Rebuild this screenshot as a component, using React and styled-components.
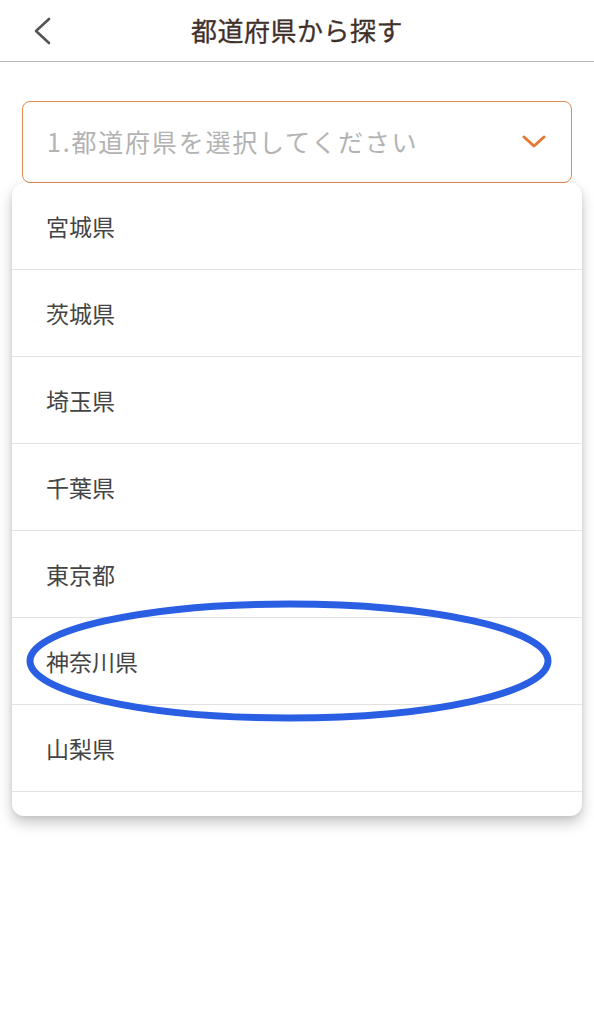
import React from "react";
import styled, { createGlobalStyle } from "styled-components";

const prefectures = [
  "宮城県",
  "茨城県",
  "埼玉県",
  "千葉県",
  "東京都",
  "神奈川県",
  "山梨県",
];

function App() {
  return (
    <Container>
      <GlobalStyle />
      <Header>
        <BackButton aria-label="戻る">
          <svg width="20" height="28" viewBox="0 0 20 28">
            <polyline
              points="16,2 3,14 16,26"
              fill="none"
              stroke="#555"
              strokeWidth="2.6"
              strokeLinecap="round"
              strokeLinejoin="round"
            />
          </svg>
        </BackButton>
        <Title>都道府県から探す</Title>
      </Header>
      <Main>
        <Select>
          <Placeholder>1.都道府県を選択してください</Placeholder>
          <svg width="24" height="14" viewBox="0 0 24 14">
            <polyline
              points="2,2 12,11 22,2"
              fill="none"
              stroke="#e27a36"
              strokeWidth="3"
              strokeLinecap="round"
              strokeLinejoin="round"
            />
          </svg>
        </Select>
        <Dropdown>
          {prefectures.map((name) => (
            <Option key={name}>{name}</Option>
          ))}
        </Dropdown>
        {/* hand-drawn highlight around 神奈川県 */}
        <Highlight width="530" height="126" viewBox="0 0 530 126">
          <ellipse
            cx="265"
            cy="63"
            rx="259"
            ry="57"
            fill="none"
            stroke="#2a5fe4"
            strokeWidth="7"
          />
        </Highlight>
      </Main>
    </Container>
  );
}

const GlobalStyle = createGlobalStyle`
  body {
    margin: 0;
    background: #fff;
    font-family: "Noto Sans CJK JP", "Noto Sans", sans-serif;
  }
`;

const Container = styled.div`
  width: 594px;
  min-height: 1024px;
  background: #fff;
`;

const Header = styled.header`
  position: relative;
  height: 62px;
  display: flex;
  align-items: center;
  justify-content: center;
  border-bottom: 1.5px solid #b9b9b9;
  box-sizing: border-box;
`;

const BackButton = styled.button`
  position: absolute;
  left: 33px;
  top: 17px;
  padding: 0;
  border: none;
  background: none;
  display: flex;
`;

const Title = styled.h1`
  margin: 0 0 2px;
  font-size: 26px;
  font-weight: 400;
  color: #3f302a;
  letter-spacing: 0.5px;
  -webkit-text-stroke: 0.3px #3f302a;
`;

const Main = styled.main`
  position: relative;
  padding: 39px 12px 0 12px;
`;

const Select = styled.div`
  margin: 0 10px;
  height: 82px;
  box-sizing: border-box;
  border: 1.5px solid #e08b50;
  border-radius: 8px;
  display: flex;
  align-items: center;
  justify-content: space-between;
  padding: 0 25px 0 24px;
`;

const Placeholder = styled.span`
  font-size: 25px;
  letter-spacing: 1.8px;
  color: #b3b3b3;
  margin-bottom: 2px;
`;

const Dropdown = styled.ul`
  list-style: none;
  margin: 0;
  padding: 0 0 24px;
  border-radius: 12px;
  background: #fff;
  box-shadow: 0 7px 14px rgba(0, 0, 0, 0.22), 0 1px 4px rgba(0, 0, 0, 0.08);
`;

const Option = styled.li`
  height: 86px;
  border-bottom: 1.5px solid #e2e2e2;
  display: flex;
  align-items: center;
  padding-left: 34px;
  font-size: 23px;
  color: #454545;
`;

const Highlight = styled.svg`
  position: absolute;
  left: 24px;
  top: 536px;
  pointer-events: none;
`;

export default App;
